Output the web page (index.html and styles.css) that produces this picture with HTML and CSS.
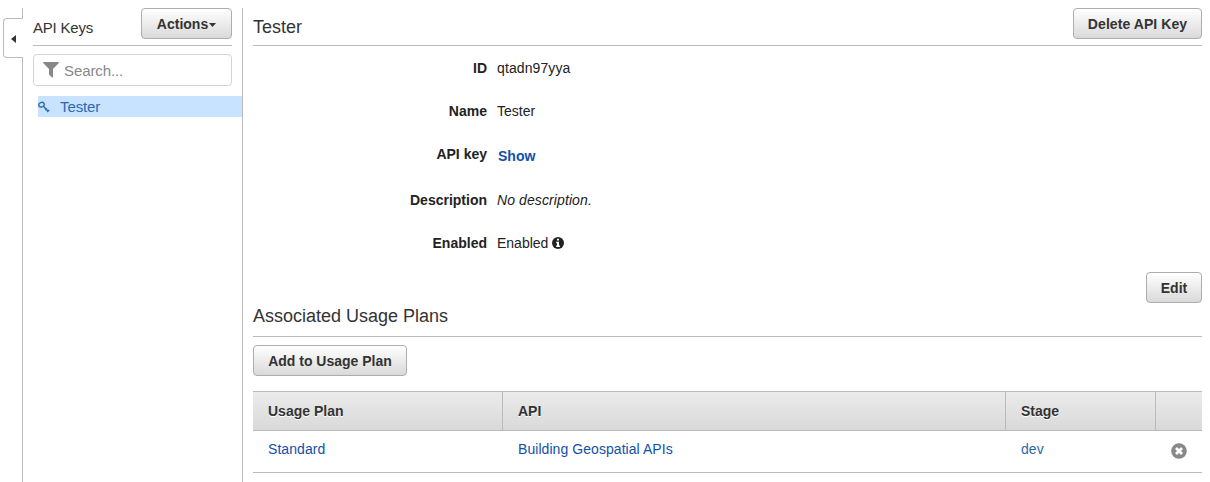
FILE: index.html
```html
<!DOCTYPE html>
<html lang="en">
<head>
<meta charset="utf-8">
<title>API Keys</title>
<link rel="stylesheet" href="styles.css">
</head>
<body>
<div class="app">
  <div class="rail">
    <div class="rail-top"></div>
    <div class="rail-tab"><svg width="5" height="8" viewBox="0 0 5 8"><path d="M5 0v8L0 4z" fill="#333"/></svg></div>
    <div class="rail-rest"></div>
  </div>
  <aside class="sidebar">
    <header class="bar">
      <h2 class="side-title">API Keys</h2>
      <button class="btn actions">Actions<svg class="caret" width="7" height="4" viewBox="0 0 7 4"><path d="M0 0h7L3.500 4z" fill="#333"/></svg></button>
    </header>
    <div class="search">
      <svg width="16" height="16" viewBox="0 0 16 16"><path d="M.6 0h14.800q.8.500.200 1.200L10 6.900V15.300q-.3.600-.9.200L6.300 12.800q-.3-.3-.3-.7V6.900L.4 1.200Q-.2.500.6 0z" fill="#888"/></svg>
      <span>Search...</span>
    </div>
    <div class="item">
      <svg width="12" height="12" viewBox="0 0 12 12" fill="none" stroke="#2c69ad"><ellipse cx="3.500" cy="3.700" rx="2.800" ry="2.300" stroke-width="1.400" transform="rotate(-20 3.500 3.700)"/><path d="M5.400 5.200l5 5.300M7.300 9.200l1.700-1.700M9.200 11l1.900-1.900" stroke-width="1.400"/></svg>
      <span>Tester</span>
    </div>
  </aside>
  <main class="main">
    <header class="bar">
      <h1 class="title">Tester</h1>
      <button class="btn delete">Delete API Key</button>
    </header>
    <dl class="details">
      <dt>ID</dt><dd class="value">qtadn97yya</dd>
      <dt>Name</dt><dd>Tester</dd>
      <dt>API key</dt><dd class="show"><a>Show</a></dd>
      <dt>Description</dt><dd class="value"><em>No description.</em></dd>
      <dt>Enabled</dt><dd>Enabled <svg class="info" width="12" height="12" viewBox="0 0 12 12"><circle cx="6" cy="6" r="6" fill="#222"/><path d="M5 1.800h2v1.700H5zM4.200 4.700H7v3.800h.9V10H4.200V8.500H5V6.200h-.8z" fill="#fff"/></svg></dd>
    </dl>
    <div class="edit-row"><button class="btn edit">Edit</button></div>
    <h2 class="plans-title">Associated Usage Plans</h2>
    <button class="btn add">Add to Usage Plan</button>
    <div class="table">
      <div class="row head"><div>Usage Plan</div><div>API</div><div>Stage</div><div></div></div>
      <div class="row body"><div>Standard</div><div>Building Geospatial APIs</div><div class="stage">dev</div>
        <div><svg width="16" height="16" viewBox="0 0 16 16"><circle cx="8" cy="8" r="7.800" fill="#888"/><path d="M5 5l6 6M11 5l-6 6" stroke="#fff" stroke-width="2.700"/></svg></div></div>
    </div>
  </main>
</div>
</body>
</html>
```
FILE: styles.css
```css
* { box-sizing: border-box; }
body {
  margin: 0;
  background: #fff;
  color: #333;
  font: 14px/20px "Liberation Sans", Arial, sans-serif;
  overflow: hidden;
}
h1, h2 { margin: 0; font-weight: 400; }
svg { display: block; flex: none; }
.app { display: flex; height: 482px; padding-top: 8px; }

.rail { display: flex; flex-direction: column; width: 23px; padding-left: 3px; }
.rail-top { height: 10px; border-right: 1px solid #bbb; }
.rail-tab {
  display: flex;
  align-items: center;
  height: 40px;
  padding: 2px 0 0 7px;
  border: 1px solid #bbb;
  border-right: 0;
  border-radius: 4px 0 0 4px;
}
.rail-rest { flex: 1; border-right: 1px solid #bbb; }

.sidebar { width: 220px; padding-left: 10px; border-right: 1px solid #bbb; }
.bar {
  display: flex;
  justify-content: space-between;
  align-items: flex-start;
  height: 38px;
  border-bottom: 1px solid #bbb;
}
.sidebar .bar { width: 199px; }
.side-title { padding-top: 10px; font-size: 15px; letter-spacing: -.2px; }
.btn {
  display: flex;
  align-items: center;
  justify-content: center;
  height: 31px;
  padding: 0;
  border: 1px solid #adadad;
  border-radius: 4px;
  background: linear-gradient(#fff, #d9d9d9);
  color: #333;
  font: bold 14px/20px "Liberation Sans", Arial, sans-serif;
}
.actions { width: 91px; }
.caret { margin: 2px 0 0 1px; }
.search {
  display: flex;
  align-items: center;
  gap: 5px;
  width: 199px;
  height: 32px;
  margin-top: 8px;
  padding-left: 9px;
  border: 1px solid #d4d4d4;
  border-radius: 4px;
  color: #888;
  font-size: 15px;
  letter-spacing: -.1px;
}
.search span { padding-top: 2px; }
.item {
  display: flex;
  align-items: center;
  gap: 10px;
  height: 21px;
  margin: 10px 0 0 5px;
  background: #c8e3ff;
  color: #2c69ad;
  font-size: 15px;
  letter-spacing: -.1px;
}

.main { flex: 1; padding: 0 8px 0 10px; }
.title { padding-top: 9px; font-size: 18px; }
.delete { width: 129px; letter-spacing: .07px; }
.details {
  display: grid;
  grid-template-columns: 234px 1fr;
  grid-template-rows: 43px 43px 46px 43px 39px;
  column-gap: 10px;
  margin: 12px 0 0;
  color: #222;
}
dt { font-weight: 700; text-align: right; }
dd { display: flex; align-items: flex-start; margin: 0; }
.value { letter-spacing: .1px; }
.show { padding: 2px 0 0 1px; color: #1250ab; font-weight: 700; }
.info { margin: 4px 0 0 4px; }
.edit-row { display: flex; justify-content: flex-end; }
.edit { width: 56px; }
.plans-title {
  height: 34px;
  padding-top: 3px;
  border-bottom: 1px solid #bbb;
  font-size: 18px;
}
.add { width: 154px; margin-top: 8px; }
.table { margin-top: 15px; }
.row { display: grid; grid-template-columns: 250px 503px 150px 46px; }
.row > div { display: flex; align-items: center; padding-left: 15px; }
.head {
  height: 40px;
  border: solid #bbb;
  border-width: 1px 0;
  background: linear-gradient(#ebebeb, #d9d9d9);
  font-weight: 700;
  text-shadow: 0 1px 0 #fff;
}
.head > div:not(:last-child) { border-right: 1px solid #bbb; }
.body { height: 42px; border-bottom: 1px solid #bbb; color: #1250ab; letter-spacing: .06px; }
.body > div { padding-bottom: 5px; }
.body > div:last-child { padding-bottom: 1px; }
.body .stage { color: #2c69ad; }
```
